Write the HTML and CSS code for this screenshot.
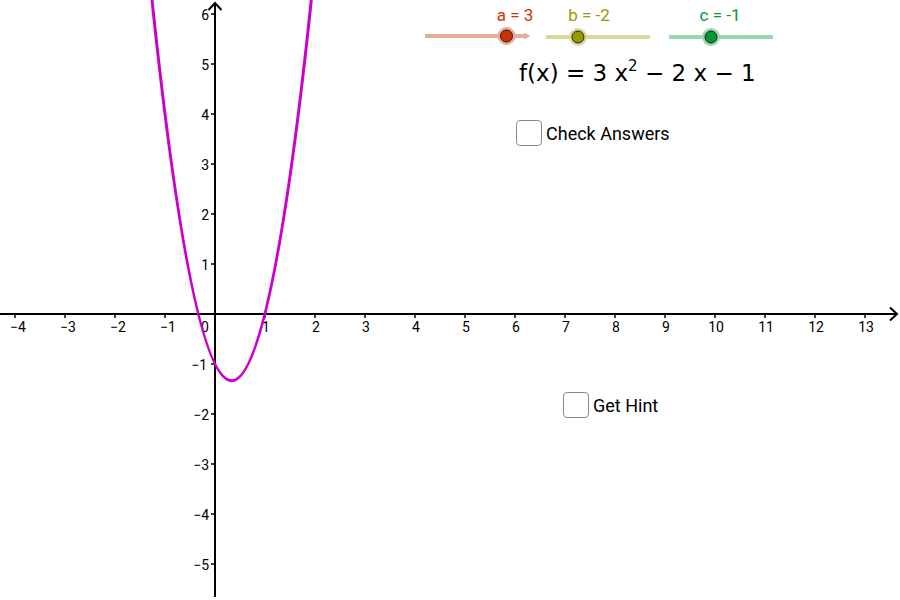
FILE: index.html
```html
<!DOCTYPE html>
<html>
<head>
<meta charset="utf-8">
<link rel="stylesheet" href="styles.css">
</head>
<body>
<div class="applet">
  <svg class="graph" width="900" height="600" viewBox="0 0 900 600">
    <g class="ticks">
      <path d="M15 314v4M65 314v4M115 314v4M165 314v4M265 314v4M315 314v4M365 314v4M415 314v4M465 314v4M515 314v4M565 314v4M615 314v4M665 314v4M715 314v4M765 314v4M815 314v4M865 314v4"/>
      <path d="M211 14h4M211 64h4M211 114h4M211 164h4M211 214h4M211 264h4M211 364h4M211 414h4M211 464h4M211 514h4M211 564h4"/>
    </g>
    <g class="axis">
      <path d="M0 314H897"/>
      <path d="M890 307.5L897 314L890 320.5"/>
      <path d="M215 597V3"/>
      <path d="M208.5 10L215 3L221.5 10"/>
    </g>
    <g class="xlabels">
      <text x="18" y="332">−4</text>
      <text x="68" y="332">−3</text>
      <text x="118" y="332">−2</text>
      <text x="168" y="332">−1</text>
      <text x="205" y="332">0</text>
      <text x="266" y="332">1</text>
      <text x="316" y="332">2</text>
      <text x="366" y="332">3</text>
      <text x="416" y="332">4</text>
      <text x="466" y="332">5</text>
      <text x="516" y="332">6</text>
      <text x="566" y="332">7</text>
      <text x="616" y="332">8</text>
      <text x="666" y="332">9</text>
      <text x="716" y="332">10</text>
      <text x="766" y="332">11</text>
      <text x="816" y="332">12</text>
      <text x="866" y="332">13</text>
    </g>
    <g class="ylabels">
      <text x="209" y="20">6</text>
      <text x="209" y="70">5</text>
      <text x="209" y="120">4</text>
      <text x="209" y="170">3</text>
      <text x="209" y="220">2</text>
      <text x="209" y="270">1</text>
      <text x="207" y="370">−1</text>
      <text x="209" y="420">−2</text>
      <text x="209" y="470">−3</text>
      <text x="209" y="520">−4</text>
      <text x="209" y="570">−5</text>
    </g>
    <path class="curve" d="M150 -19.5Q231.25 776.75 312.5 -11.375"/>

    <g class="slider slider-a">
      <path class="track" d="M425 36H527"/>
      <path class="track-end" d="M524 33.5L529 36L524 38.5"/>
      <circle class="halo" cx="506.5" cy="36" r="9"/>
      <circle class="dot" cx="506.5" cy="36" r="6"/>
      <text x="515" y="21">a = 3</text>
    </g>
    <g class="slider slider-b">
      <path class="track" d="M546 37H650"/>
      <circle class="halo" cx="578" cy="37" r="9"/>
      <circle class="dot" cx="578" cy="37" r="6"/>
      <text x="589" y="21">b = -2</text>
    </g>
    <g class="slider slider-c">
      <path class="track" d="M669 37H773"/>
      <circle class="halo" cx="711" cy="37" r="9"/>
      <circle class="dot" cx="711" cy="37" r="6"/>
      <text x="720" y="21">c = -1</text>
    </g>
  </svg>

  <div class="formula">f(x) = 3 x<sup>2</sup> − 2 x − 1</div>

  <div class="check check-answers"><span class="box"></span><span class="label">Check Answers</span></div>
  <div class="check get-hint"><span class="box"></span><span class="label">Get Hint</span></div>
</div>
</body>
</html>
```
FILE: styles.css
```css
html, body {
  margin: 0;
  padding: 0;
  background: #ffffff;
}
.applet {
  position: relative;
  width: 900px;
  height: 600px;
  overflow: hidden;
  font-family: Roboto, "Liberation Sans", sans-serif;
}
.graph {
  display: block;
}
.axis path {
  fill: none;
  stroke: #000;
  stroke-width: 2;
}
.ticks path {
  fill: none;
  stroke: #000;
  stroke-width: 1.5;
}
.xlabels text {
  font-family: Roboto, "Liberation Sans", sans-serif;
  font-size: 14px;
  text-anchor: middle;
  fill: #000;
}
.ylabels text {
  font-family: Roboto, "Liberation Sans", sans-serif;
  font-size: 14px;
  text-anchor: end;
  fill: #000;
}
.curve {
  fill: none;
  stroke: #cc00cc;
  stroke-width: 3;
}
.slider text {
  font-family: Roboto, "Liberation Sans", sans-serif;
  font-size: 17px;
  text-anchor: middle;
}
.slider .track {
  fill: none;
  stroke-width: 4;
}
.slider .track-end {
  fill: none;
  stroke-width: 1.5;
}
.slider .dot {
  stroke: #222;
  stroke-width: 1;
}
.slider-a text { fill: #cc3300; }
.slider-a .track, .slider-a .track-end { stroke: #eaab99; }
.slider-a .halo { fill: #eaab99; }
.slider-a .dot { fill: #cc3300; }
.slider-b text { fill: #999900; }
.slider-b .track { stroke: #d9d99b; }
.slider-b .halo { fill: #d9d99b; }
.slider-b .dot { fill: #999900; }
.slider-c text { fill: #009933; }
.slider-c .track { stroke: #99d8ad; }
.slider-c .halo { fill: #99d8ad; }
.slider-c .dot { fill: #009933; }

.formula {
  position: absolute;
  left: 519px;
  top: 57px;
  font-family: "DejaVu Sans", Roboto, sans-serif;
  font-size: 23px;
  line-height: 32px;
  color: #000;
  white-space: nowrap;
}
.formula sup {
  font-size: 15px;
  line-height: 0;
  vertical-align: 10px;
}
.check {
  position: absolute;
  display: flex;
  align-items: center;
  gap: 4px;
}
.check-answers {
  left: 516px;
  top: 120px;
}
.get-hint {
  left: 563px;
  top: 392px;
}
.check .box {
  width: 24px;
  height: 24px;
  border: 1.5px solid #8a8a8a;
  border-radius: 4px;
  background: #fff;
}
.check .label {
  font-size: 18px;
  color: #000;
}
```
